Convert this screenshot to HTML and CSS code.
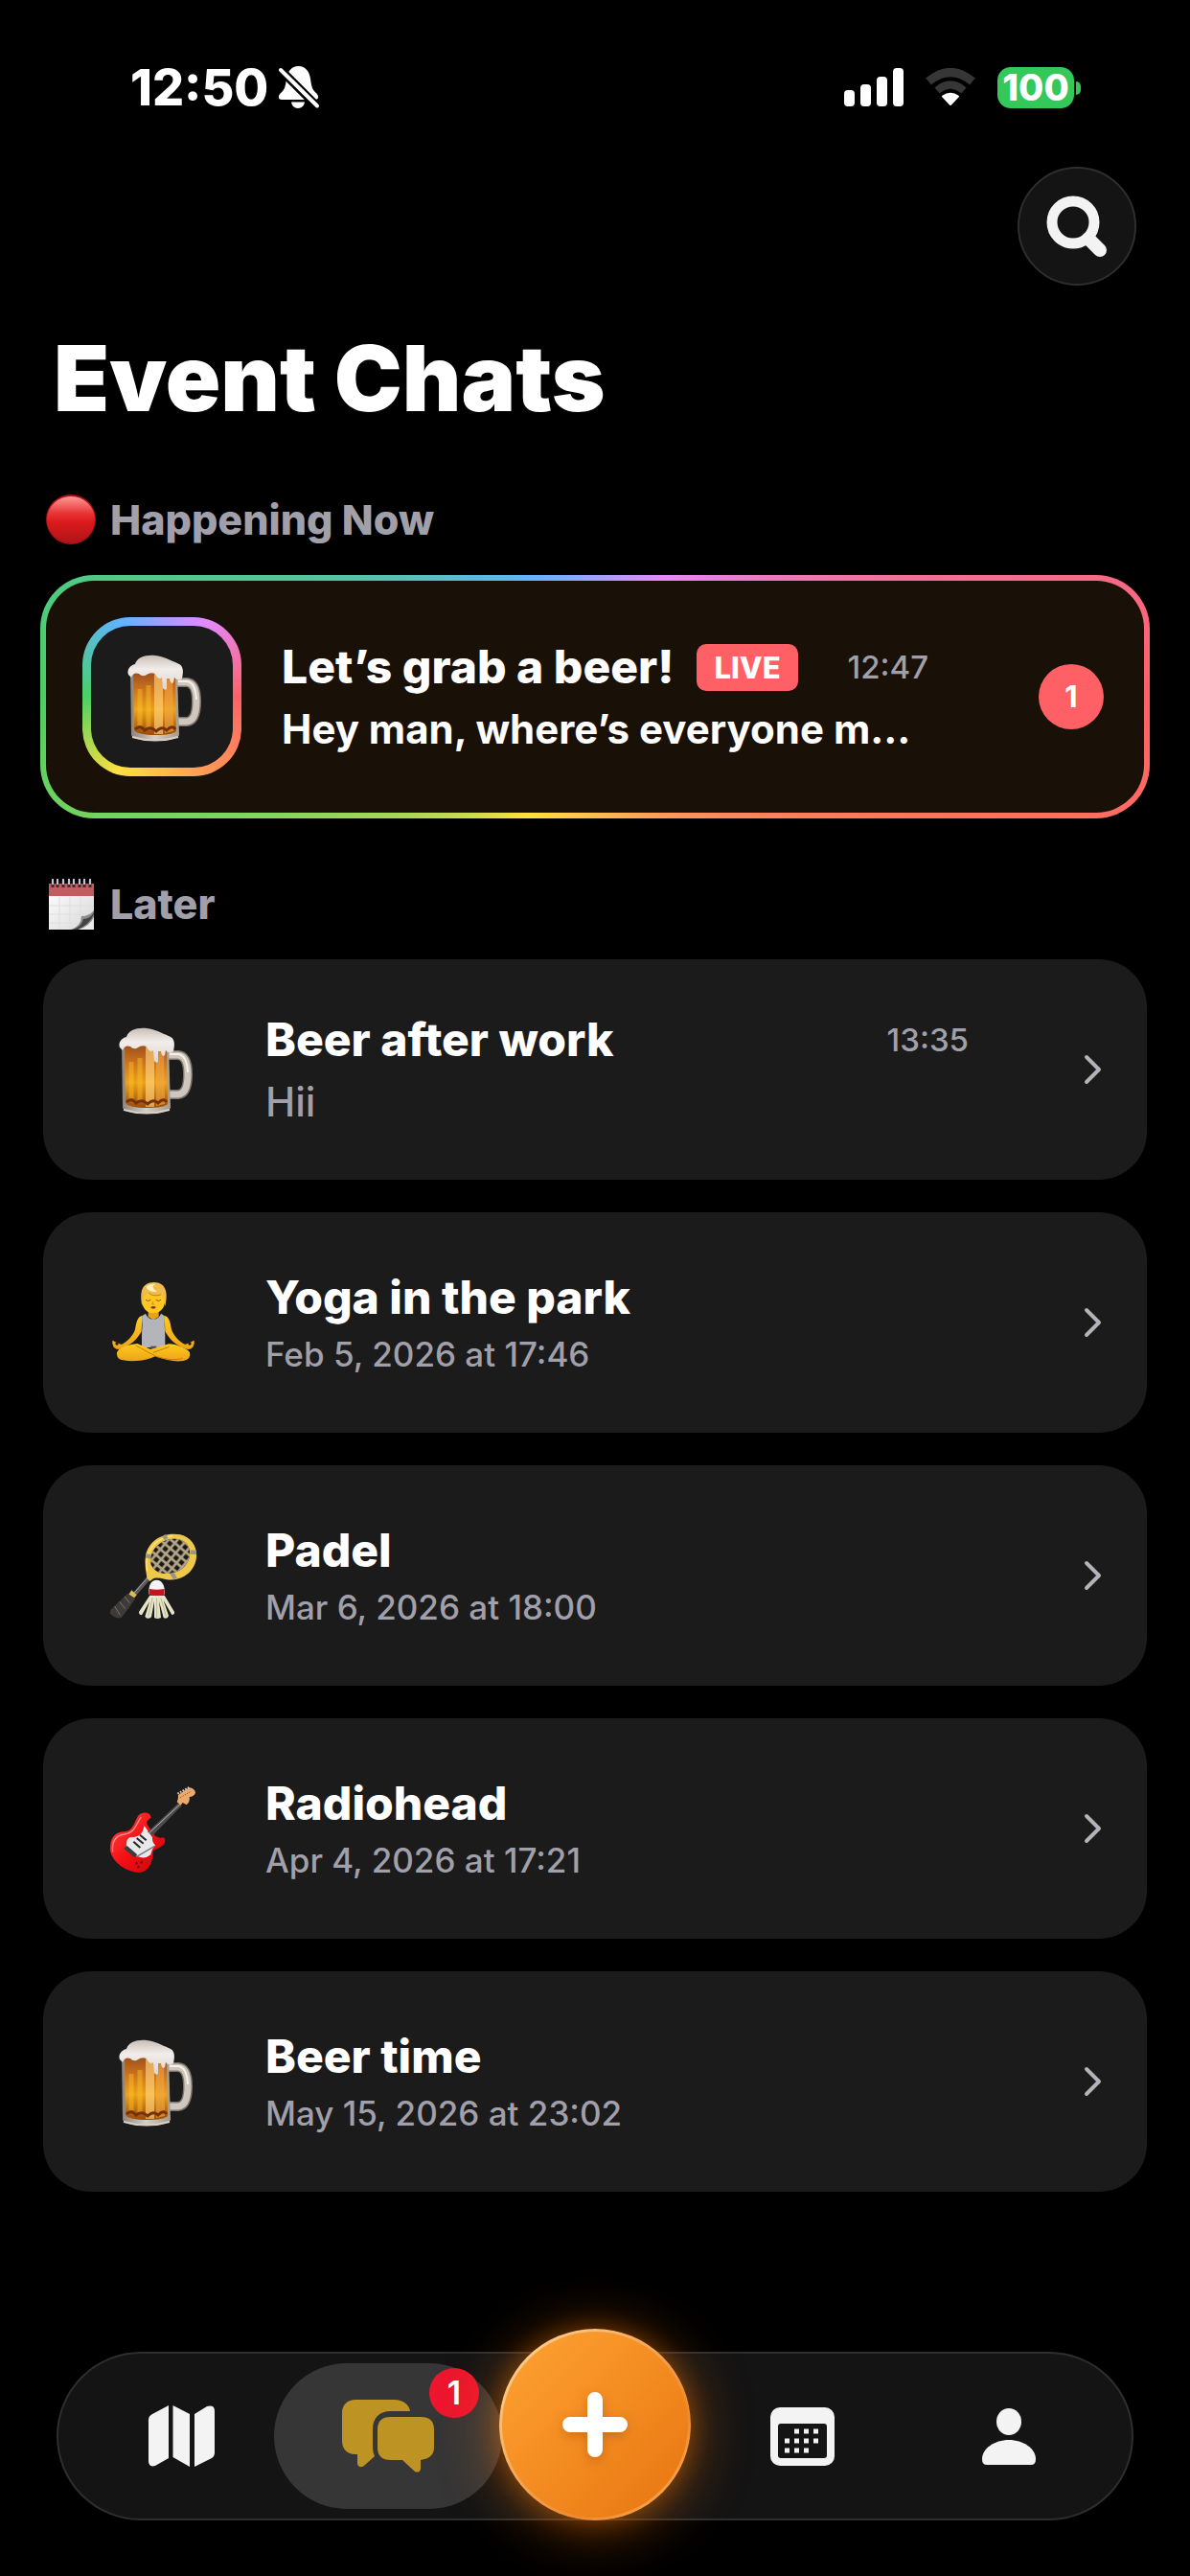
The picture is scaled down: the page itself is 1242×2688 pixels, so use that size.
FILE: index.html
```html
<!DOCTYPE html>
<html lang="en">
<head>
  <meta charset="UTF-8" />
  <meta name="viewport" content="width=device-width, initial-scale=1.0"/>
  <title>Event Chats</title>
  <link rel="stylesheet" href="styles.css">
</head>
<body>

  <!-- shared drawings -->
  <svg class="defs" width="0" height="0" aria-hidden="true">
    <defs>
      <linearGradient id="beerFill" x1="0" y1="0" x2="0" y2="1">
        <stop offset="0" stop-color="#9c5020"/>
        <stop offset=".3" stop-color="#cf741a"/>
        <stop offset=".6" stop-color="#eda21a"/>
        <stop offset="1" stop-color="#9c4a06"/>
      </linearGradient>
      <linearGradient id="glass" x1="0" y1="0" x2="1" y2="0">
        <stop offset="0" stop-color="#8a8178"/>
        <stop offset=".5" stop-color="#d8cfc4"/>
        <stop offset="1" stop-color="#a39a90"/>
      </linearGradient>
      <linearGradient id="foam" x1="0" y1="0" x2="0" y2="1">
        <stop offset="0" stop-color="#c9beb6"/>
        <stop offset=".4" stop-color="#f2edea"/>
        <stop offset="1" stop-color="#ddd5d1"/>
      </linearGradient>
      <linearGradient id="redBall" x1="0" y1="0" x2="0" y2="1">
        <stop offset="0" stop-color="#ff9a96"/>
        <stop offset=".35" stop-color="#e8393a"/>
        <stop offset=".55" stop-color="#dc1a1c"/>
        <stop offset="1" stop-color="#b01518"/>
      </linearGradient>
      <linearGradient id="paper" x1="0" y1="0" x2="1" y2="1">
        <stop offset="0" stop-color="#fff"/>
        <stop offset="1" stop-color="#d8d8d8"/>
      </linearGradient>
      <linearGradient id="skin" x1="0" y1="0" x2="0" y2="1">
        <stop offset="0" stop-color="#ffcb1f"/>
        <stop offset="1" stop-color="#eda416"/>
      </linearGradient>
      <linearGradient id="redBody" x1="0" y1="0" x2="1" y2="1">
        <stop offset="0" stop-color="#ff4a4a"/>
        <stop offset=".5" stop-color="#f50f14"/>
        <stop offset="1" stop-color="#c4060c"/>
      </linearGradient>
      <pattern id="strings" width="22" height="22" patternUnits="userSpaceOnUse" patternTransform="rotate(40)">
        <path d="M0 5H22M5 0V22" stroke="#b3a587" stroke-width="8"/>
      </pattern>

      <symbol id="beer" viewBox="0 0 96 96">
        <path d="M64 33H74Q84 34 84 53Q84 73 74 74H64" fill="none" stroke="#7d756c" stroke-width="10"/>
        <path d="M64 33H74Q84 34 84 53Q84 73 74 74H64" fill="none" stroke="#cfc7bd" stroke-width="7"/>
        <path d="M65 32H74Q83 33 84 51" fill="none" stroke="#f4f1ec" stroke-width="2"/>
        <path d="M15 22H64L66 88Q63 94 41 94Q19 94 16 88Z" fill="url(#glass)"/>
        <path d="M18 22H62L63 84Q59 88 41 88Q23 88 19 83Z" fill="url(#beerFill)"/>
        <path d="M40 24H49V87H40Z" fill="#ffd27d" opacity=".65"/>
        <path d="M51 24H59L60 84L51 86Z" fill="#f4a94a" opacity=".55"/>
        <path d="M25 40V78M34 36V80" stroke="#ffc92f" stroke-width="5" opacity=".4"/>
        <path d="M20 82Q25 77 30 83Q36 78 42 84Q48 78 53 83Q59 77 62 82" fill="none" stroke="#74310a" stroke-width="3"/>
        <path d="M17 90Q41 97 65 90" fill="none" stroke="#d8d1c6" stroke-width="2"/>
        <path d="M13 25C11 20 15 15 20 14C22 7 31 4 41 5C50 6 57 10 64 13C70 15 71 20 69 29Q64 32 61 28L60 33Q57 36 56 29L53 29V40Q51 42 49 39L48 28Q44 31 41 24Q36 22 32 25Q28 28 24 24Q18 22 16 28Z" fill="url(#foam)"/>
      </symbol>

      <symbol id="yoga" viewBox="96 96 288 288">
        <path d="M205 219C190 221 187 240 183 262C177 282 158 300 140 309L112 296Q110 304 116 317Q126 327 139 322C169 313 190 292 203 268ZM275 219C290 221 293 240 297 262C303 282 322 300 340 309L368 296Q370 304 364 317Q354 327 341 322C311 313 290 292 277 268Z" fill="url(#skin)"/>
        <circle cx="126" cy="306" r="5" fill="#1b1b1b"/>
        <circle cx="354" cy="306" r="5" fill="#1b1b1b"/>
        <path d="M224 195H257V222L240 232L224 222Z" fill="#e9a313"/>
        <path d="M204 220L216 212Q222 229 240 230Q258 229 264 212L276 220Q274 250 277 278V318H204V278Q207 250 204 220Z" fill="#b4b5ba"/>
        <path d="M232 314H250V326H232Z" fill="#4a5558"/>
        <path d="M190 306Q148 311 132 325Q118 340 134 355Q150 362 188 360Q222 358 246 346Q300 366 334 360Q360 354 354 334Q348 322 322 314Q300 306 288 307L232 324Z" fill="url(#skin)"/>
        <path d="M185 312L248 346Q300 362 332 352M290 316L240 334" fill="none" stroke="#c67d10" stroke-width="3"/>
        <path d="M204 152Q201 210 240 210Q280 210 278 152Q260 128 224 134Z" fill="#ffc820"/>
        <path d="M205 188C196 140 206 115 242 114C278 115 288 143 277 190Q274 162 264 153Q240 160 226 148Q210 156 205 188Z" fill="#eebb4c"/>
        <path d="M226 148Q240 160 264 153" fill="none" stroke="#b98324" stroke-width="3"/>
        <path d="M217 128Q230 117 247 120Q228 128 252 144Q224 145 217 128Z" fill="#fff0bd"/>
        <path d="M216 169Q224 176 232 169M248 169Q256 176 264 169" fill="none" stroke="#8f590e" stroke-width="3"/>
        <ellipse cx="240" cy="193" rx="8" ry="4" fill="#8d351a"/>
        <path d="M240 174L236 183H244" fill="none" stroke="#d18a15" stroke-width="3"/>
      </symbol>

      <symbol id="padel" viewBox="96 78 288 288">
        <path d="M226 230L178 284" stroke="#5b5b5b" stroke-width="13"/>
        <path d="M223 228L177 280" stroke="#a3a3a3" stroke-width="3"/>
        <path d="M172 268L188 283L176 297L162 283Z" fill="#dfbc58"/>
        <path d="M160 278L184 294Q164 324 140 354Q120 360 104 340Q104 334 108 328Z" fill="#3f3b39"/>
        <path d="M150 288L166 308M134 304L152 326M119 318L136 346" stroke="#7a7470" stroke-width="3"/>
        <path d="M219 222Q212 188 216 160C224 116 268 84 324 94C373 106 386 156 367 193C348 229 312 240 278 234Q246 226 238 233L229 240L220 230Z" fill="#eec84b"/>
        <path d="M233 188C224 156 250 114 296 108C338 104 360 130 353 166C342 204 308 219 274 216Q242 211 233 188Z" fill="#191614"/>
        <path d="M233 188C224 156 250 114 296 108C338 104 360 130 353 166C342 204 308 219 274 216Q242 211 233 188Z" fill="url(#strings)"/>
        <path d="M222 208Q214 176 226 150Q246 106 300 98" fill="none" stroke="#ffe48a" stroke-width="4"/>
        <path d="M272 97L282 108M356 149L375 150M217 160L232 163M298 214L309 232" stroke="#999487" stroke-width="13"/>
        <path d="M229 284L195 336Q195 346 204 346L228 304L214 350Q222 362 234 352L243 302V354Q252 360 264 354L258 302L272 354Q284 360 288 348L272 300L298 345Q308 344 306 336L275 284Z" fill="#e7e4c6"/>
        <path d="M238 290L224 350M251 290V354M263 290L280 350" stroke="#bdb895" stroke-width="3"/>
        <path d="M227 282C223 252 234 236 250 236C268 236 278 254 275 282Z" fill="#f4f4f6"/>
        <path d="M228 264Q250 269 275 264L274 283Q250 287 228 282Z" fill="#c41420"/>
        <path d="M229 289H274" stroke="#f4f4e4" stroke-width="6" stroke-dasharray="6 4"/>
      </symbol>

      <symbol id="guitar" viewBox="96 90 288 288">
        <path d="M192 195C208 178 232 184 233 200C228 204 216 208 221 222L246 258L262 264Q276 258 277 270C278 287 258 294 240 304C238 338 228 370 196 372C158 370 112 342 105 302C103 266 118 246 148 244C178 242 180 214 192 195Z" fill="url(#redBody)"/>
        <path d="M113 308C109 275 122 256 150 252C184 248 188 216 202 198" fill="none" stroke="#ff8c86" stroke-width="4"/>
        <path d="M212 226L222 240L237 262Q236 278 246 286Q234 300 232 316Q214 332 188 320L156 292Q154 268 166 262Q198 262 206 244Z" fill="#e8e8ea"/>
        <path d="M222 245L319 154L329 163L238 256Z" fill="#4c4c4e"/>
        <path d="M225 250L325 157" stroke="#b9b9b9" stroke-width="3"/>
        <path d="M198 254L218 271M188 264L209 281M178 275L199 294" stroke="#26262a" stroke-width="6"/>
        <path d="M158 288L190 316L180 324L148 297Z" fill="#3c3c40"/>
        <path d="M188 322L243 290" stroke="#77777b" stroke-width="4"/>
        <path d="M314 151Q319 140 318 129L352 106Q370 108 372 122Q368 134 353 135Q356 150 344 160L332 153L326 161Z" fill="#eda96b"/>
        <path d="M316 125L352 105" stroke="#d0d0d0" stroke-width="6" stroke-dasharray="5 4"/>
        <path d="M325 137L359 117" stroke="#5c3417" stroke-width="3" stroke-dasharray="3 5"/>
        <circle cx="187" cy="343" r="4" fill="#6c0a0c"/>
        <circle cx="203" cy="340" r="4" fill="#6c0a0c"/>
        <circle cx="193" cy="354" r="4" fill="#6c0a0c"/>
      </symbol>

      <symbol id="chevron" viewBox="0 0 20 32">
        <path d="M3 3L16 16L3 29" fill="none" stroke="currentColor" stroke-width="4" stroke-linecap="round" stroke-linejoin="round"/>
      </symbol>
    </defs>
  </svg>

  <div class="status-bar">
    <div class="status-left">
      <span class="clock">12:50</span>
      <svg width="44" height="46" viewBox="0 0 44 46">
        <path d="M21.500 1C29 1 33 7 34 14C35 22 36 26 40 29C43 32 43 36 39 36H4C0 36 0 32 3 29C7 26 8 22 9 14C10 7 14 1 21.500 1Z" fill="#fff"/>
        <path d="M14 38.500H28Q27 45 21 45T14 38.500Z" fill="#fff"/>
        <path d="M0 2L44 46" stroke="#000" stroke-width="9"/>
        <path d="M3 5L41 42.500" stroke="#fff" stroke-width="4" stroke-linecap="round"/>
      </svg>
    </div>
    <div class="status-right">
      <svg width="62" height="40" viewBox="0 0 62 40" fill="#fff">
        <rect x="0" y="23" width="11" height="17" rx="4"/>
        <rect x="17" y="17" width="11" height="23" rx="4"/>
        <rect x="34" y="9" width="11" height="31" rx="4"/>
        <rect x="51" y="0" width="11" height="40" rx="4"/>
      </svg>
      <svg width="54" height="40" viewBox="0 0 54 40" fill="none">
        <path d="M4 14Q27 -5 50 14" stroke="#363636" stroke-width="9"/>
        <path d="M13 23.500Q27 11.500 41 23.500" stroke="#363636" stroke-width="8"/>
        <path d="M27 38L19 29.500Q27 24 35 29.500Z" fill="#fff" stroke="#fff" stroke-width="2" stroke-linejoin="round"/>
      </svg>
      <div class="battery"><span>100</span></div>
    </div>
  </div>

  <header>
    <button class="search-btn" aria-label="Search">
      <svg width="64" height="64" viewBox="0 0 64 64" fill="none" stroke="#f3f3f3">
        <circle cx="28" cy="28" r="22" stroke-width="11"/>
        <path d="M44 45L56 57" stroke-width="14" stroke-linecap="round"/>
      </svg>
    </button>
    <h1>Event Chats</h1>
  </header>

  <main>
    <section>
      <h2>
        <svg width="54" height="54" viewBox="0 0 54 54">
          <circle cx="27" cy="27" r="26" fill="#a91217"/>
          <ellipse cx="27" cy="27" rx="25" ry="24" fill="url(#redBall)"/>
        </svg>
        Happening Now
      </h2>
      <a class="card live" href="#">
        <div class="avatar ring"><svg class="emoji"><use href="#beer"/></svg></div>
        <div class="info">
          <div class="row">
            <h3>Let’s grab a beer!</h3>
            <span class="tag">LIVE</span>
            <time>12:47</time>
          </div>
          <p class="message unread">Hey man, where’s everyone m…</p>
        </div>
        <span class="count">1</span>
      </a>
    </section>

    <section>
      <h2>
        <svg width="54" height="54" viewBox="0 0 54 54">
          <path d="M4 8H51V54H4Z" fill="url(#paper)"/>
          <path d="M4 6H51V19H4Z" fill="#c25c5f"/>
          <path d="M4 29H51M4 38H51M4 47H42M15 20V53M26 20V53M37 20V50" stroke="#dedede" stroke-width="1"/>
          <path d="M8 3V10M13 3V10M19 3V10M25 3V10M30 3V10M36 3V10M41 3V10M47 3V10" stroke="#40272c" stroke-width="3"/>
          <path d="M8 1V7M13 1V7M19 1V7M25 1V7M30 1V7M36 1V7M41 1V7M47 1V7" stroke="#bcc5d0" stroke-width="2"/>
          <path d="M51 34Q46 40 38 40Q38 50 27 54H51Z" fill="#8d8d8d"/>
          <path d="M51 36Q47 43 40 43Q38 51 29 54H34Q46 49 51 38Z" fill="#444"/>
          <path d="M51 41Q47 50 35 54H51Z" fill="#ececec"/>
        </svg>
        Later
      </h2>

      <a class="card" href="#">
        <div class="avatar"><svg class="emoji"><use href="#beer"/></svg></div>
        <div class="info">
          <div class="row">
            <h3>Beer after work</h3>
            <time>13:35</time>
          </div>
          <p class="message">Hii</p>
        </div>
        <svg class="chevron"><use href="#chevron"/></svg>
      </a>

      <a class="card" href="#">
        <div class="avatar"><svg class="emoji"><use href="#yoga"/></svg></div>
        <div class="info">
          <h3>Yoga in the park</h3>
          <p class="date">Feb 5, 2026 at 17:46</p>
        </div>
        <svg class="chevron"><use href="#chevron"/></svg>
      </a>

      <a class="card" href="#">
        <div class="avatar"><svg class="emoji"><use href="#padel"/></svg></div>
        <div class="info">
          <h3>Padel</h3>
          <p class="date">Mar 6, 2026 at 18:00</p>
        </div>
        <svg class="chevron"><use href="#chevron"/></svg>
      </a>

      <a class="card" href="#">
        <div class="avatar"><svg class="emoji"><use href="#guitar"/></svg></div>
        <div class="info">
          <h3>Radiohead</h3>
          <p class="date">Apr 4, 2026 at 17:21</p>
        </div>
        <svg class="chevron"><use href="#chevron"/></svg>
      </a>

      <a class="card" href="#">
        <div class="avatar"><svg class="emoji"><use href="#beer"/></svg></div>
        <div class="info">
          <h3>Beer time</h3>
          <p class="date">May 15, 2026 at 23:02</p>
        </div>
        <svg class="chevron"><use href="#chevron"/></svg>
      </a>
    </section>
  </main>

  <nav>
    <button class="tab" aria-label="Map">
      <svg width="69" height="65" viewBox="0 0 69 65" fill="#f3f3f3">
        <path d="M21 0V55L7 63Q0 65 0 58V15Q0 11 4 9Z"/>
        <path d="M25.500 0L43 9V64L25.500 54Z"/>
        <path d="M48 9L61 1Q69 -1 69 6V49Q69 53 66 55L48 64Z"/>
      </svg>
    </button>
    <button class="tab active" aria-label="Chats">
      <svg width="96" height="76" viewBox="0 0 96 76" fill="#bd9424">
        <path d="M14 0H54C64 0 70 5 71 12H51C39 12 32 19 32 31V50Q32 55 34 59L24 68C20 72 16 70 16 66V57H14C5 57 0 51 0 43V14C0 5 6 0 14 0Z"/>
        <path d="M51 18H82Q96 18 96 31V50Q96 61 82 63V71Q82 77 76 75L63 63H51Q37 63 37 50V31Q37 18 51 18Z"/>
      </svg>
      <span class="badge">1</span>
    </button>
    <button class="add-btn" aria-label="New event">
      <svg width="72" height="72" viewBox="0 0 72 72" stroke="#fff" stroke-width="16" stroke-linecap="round">
        <path d="M36 10V62M10 36H62"/>
      </svg>
    </button>
    <button class="tab" aria-label="Calendar">
      <svg width="67" height="61" viewBox="0 0 67 61" fill="#f3f3f3">
        <rect width="67" height="61" rx="10"/>
        <rect x="8" y="17" width="51" height="36" rx="3" fill="#141414"/>
        <path d="M25 25H51M15 35H51M15 45H41" fill="none" stroke="#f3f3f3" stroke-width="5" stroke-dasharray="5 5"/>
      </svg>
    </button>
    <button class="tab" aria-label="Profile">
      <svg width="56" height="60" viewBox="0 0 56 60" fill="#f3f3f3">
        <ellipse cx="28" cy="15" rx="13" ry="14"/>
        <path d="M28 34C43 34 56 43 56 54Q56 60 51 60H5Q0 60 0 54C0 43 13 34 28 34Z"/>
      </svg>
    </button>
  </nav>

</body>
</html>
```
FILE: styles.css
```css
* {
  box-sizing: border-box;
}
body {
  font-family: Inter, "Liberation Sans", sans-serif;
  background: #000;
  color: #fff;
  margin: 0;
  min-height: 100vh;
  display: flex;
  flex-direction: column;
}
h1, h2, h3, p {
  margin: 0;
}
svg {
  display: block;
  flex-shrink: 0;
}
button {
  font: inherit;
  color: inherit;
  border: none;
  padding: 0;
  cursor: pointer;
  display: flex;
  align-items: center;
  justify-content: center;
}
.defs {
  position: absolute;
}

/* status bar */
.status-bar {
  display: flex;
  justify-content: space-between;
  align-items: center;
  padding: 60px 121px 0 136px;
}
.status-left, .status-right {
  display: flex;
  align-items: center;
  height: 62px;
}
.status-left {
  gap: 10px;
}
.status-right {
  gap: 22px;
}
.clock {
  font-size: 52px;
  font-weight: 800;
}
.battery {
  position: relative;
  width: 80px;
  height: 43px;
  border-radius: 14px;
  background: #34c759;
  font-size: 38px;
  font-weight: 800;
  line-height: 43px;
  text-align: center;
}
.battery::after {
  content: "";
  position: absolute;
  left: 82px;
  top: 15px;
  width: 5px;
  height: 14px;
  border-radius: 0 5px 5px 0;
  background: #34c759;
}

/* header */
header {
  padding: 52px 56px 0;
}
.search-btn {
  width: 124px;
  height: 124px;
  margin-left: auto;
  border-radius: 50%;
  background: #141414;
  border: 2px solid #2e2e2e;
}
h1 {
  margin-top: 39px;
  font-size: 95px;
  font-weight: 900;
  line-height: 116px;
}

/* chat list */
main {
  padding: 0 45px;
}
section {
  margin-top: 60px;
}
h2 {
  display: flex;
  align-items: center;
  gap: 14px;
  height: 58px;
  margin-bottom: 29px;
  padding-left: 2px;
  font-size: 43px;
  font-weight: 800;
  color: #a1a0aa;
}
.card {
  display: flex;
  align-items: center;
  padding: 40px 46px 40px 40px;
  border-radius: 50px;
  background: #1b1b1b;
  color: inherit;
  text-decoration: none;
}
.card + .card {
  margin-top: 34px;
}
.card.live {
  margin: 0 -3px;
  padding: 38px 42px 38px 38px;
  border: 6px solid transparent;
  border-radius: 56px;
  background:
    linear-gradient(#191007, #191007) padding-box,
    conic-gradient(from 90deg, #ff6065, #ff9a55, #ffe040, #4bcf64, #5eb4ff, #e28aff, #ff6065) border-box;
}
.avatar {
  width: 150px;
  height: 150px;
  display: flex;
  align-items: center;
  justify-content: center;
  flex-shrink: 0;
}
.avatar.ring {
  width: 166px;
  height: 166px;
  border: 9px solid transparent;
  border-radius: 50px;
  background:
    linear-gradient(#1b1b1b, #1b1b1b) padding-box,
    conic-gradient(from 90deg, #ff6065, #ff9a55, #ffe040, #4bcf64, #5eb4ff, #e28aff, #ff6065) border-box;
}
.emoji {
  width: 96px;
  height: 96px;
}
.info {
  flex: 1;
  min-width: 0;
  margin: 0 120px 0 42px;
}
.live .info {
  margin-right: 115px;
}
.row {
  display: flex;
  align-items: center;
}
h3 {
  font-size: 48px;
  font-weight: 800;
  line-height: 56px;
  white-space: nowrap;
}
.tag {
  margin-left: 24px;
  padding: 0 18px;
  border-radius: 10px;
  background: #ff6065;
  font-size: 31px;
  font-weight: 800;
  line-height: 49px;
}
time {
  margin-left: auto;
  font-size: 33px;
  font-weight: 500;
  color: #a1a0aa;
}
.message {
  margin-top: 12px;
  font-size: 42px;
  font-weight: 500;
  line-height: 50px;
  color: #a1a0aa;
  white-space: nowrap;
}
.message.unread {
  font-weight: 700;
  color: #fff;
}
.date {
  margin-top: 10px;
  font-size: 35px;
  font-weight: 500;
  line-height: 42px;
  color: #a1a0aa;
}
.chevron {
  width: 20px;
  height: 32px;
  color: #b4b3ba;
}
.count {
  width: 68px;
  height: 68px;
  border-radius: 50%;
  background: #ff6065;
  font-size: 31px;
  font-weight: 700;
  line-height: 68px;
  text-align: center;
}

/* bottom tabs */
nav {
  display: grid;
  grid-template-columns: repeat(5, 1fr);
  grid-template-rows: 100%;
  align-items: center;
  height: 176px;
  margin: auto 59px 58px;
  padding: 0 20px;
  border: 2px solid #2e2e2e;
  border-radius: 88px;
  background: #141414;
}
.tab {
  position: relative;
  height: 152px;
  background: none;
}
.tab.active {
  margin: 0 -11px;
  border-radius: 76px;
  background: #363636;
}
.badge {
  position: absolute;
  top: 5px;
  right: 24px;
  width: 52px;
  height: 52px;
  border-radius: 50%;
  background: #ec162e;
  font-size: 34px;
  font-weight: 600;
  line-height: 52px;
}
.add-btn {
  position: relative;
  justify-self: center;
  align-self: end;
  width: 200px;
  height: 200px;
  margin-bottom: -2px;
  border: 3px solid transparent;
  border-radius: 50%;
  background:
    linear-gradient(135deg, #ffa333, #e87510) padding-box,
    linear-gradient(135deg, #ffd9a0, #ef8a2a 70%, #ffb25c) border-box;
  box-shadow: 0 6px 60px rgba(255, 122, 0, 0.5), 0 0 24px rgba(255, 122, 0, 0.3);
}
.add-btn svg {
  filter: drop-shadow(0 4px 6px rgba(120, 50, 0, 0.3));
}
```
